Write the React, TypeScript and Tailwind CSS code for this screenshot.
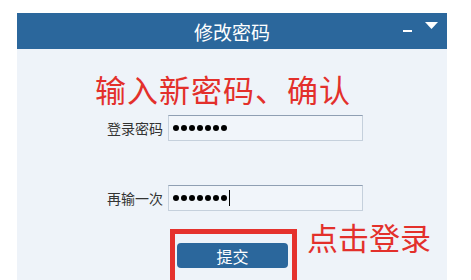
import React from "react";

function Dots({ caret }: { caret?: boolean }) {
  return (
    <div className="flex items-center gap-[2px]">
      {[0, 1, 2, 3, 4, 5, 6].map((i) => (
        <span key={i} className="w-[6px] h-[6px] rounded-full bg-black"></span>
      ))}
      {caret ? <span className="w-[1px] h-[16px] bg-black"></span> : null}
    </div>
  );
}

export default function App() {
  const font = { fontFamily: '"Noto Sans CJK SC", "Noto Sans", sans-serif' };
  return (
    <div className="w-[471px] h-[280px] bg-white overflow-hidden" style={font}>
      <div className="ml-[17px] mt-[13px] w-[430px] h-[267px] flex flex-col bg-[#eef3f9]">
        <div className="relative h-[36px] bg-[#2b679c] flex items-center justify-center shrink-0">
          <span className="text-white text-[19px] leading-none">修改密码</span>
          <span className="absolute left-[386px] top-[17px] w-[9px] h-[2px] bg-white"></span>
          <svg className="absolute left-[408px] top-[9px]" width="13" height="8" viewBox="0 0 13 8">
            <polygon points="0,0 13,0 6.5,7" fill="white" />
          </svg>
        </div>
        <div className="flex flex-col">
          <div className="ml-[78px] mt-[22px] text-[#e3302b] text-[31px] leading-[36px] tracking-[1px]">
            输入新密码、确认
          </div>
          <div className="flex items-center mt-[8px]">
            <span className="w-[151px] text-right pr-[5px] text-[14px] text-[#333]">登录密码</span>
            <div className="w-[195px] h-[26px] bg-[#f1f5fa] border border-[#c5d0dc] border-t-[#8f9fb3] flex items-center pl-[4px]">
              <Dots />
            </div>
          </div>
          <div className="flex items-center mt-[44px]">
            <span className="w-[151px] text-right pr-[5px] text-[14px] text-[#333]">再输一次</span>
            <div className="w-[195px] h-[26px] bg-[#f1f5fa] border border-[#c5d0dc] border-t-[#8f9fb3] flex items-center pl-[4px]">
              <Dots caret />
            </div>
          </div>
          <div className="flex items-start mt-[18px]">
            <div className="ml-[153px] w-[127px] h-[60px] border-[5px] border-[#e5312d] pt-[9px] pl-[2px] flex justify-start">
              <div className="w-[111px] h-[25px] rounded-[4px] bg-[#2b679c] flex items-center justify-center">
                <span className="text-white text-[16px] leading-none">提交</span>
              </div>
            </div>
            <div className="ml-[10px] -mt-[10px] text-[#e3302b] text-[31px] leading-[36px]">
              点击登录
            </div>
          </div>
        </div>
      </div>
    </div>
  );
}
